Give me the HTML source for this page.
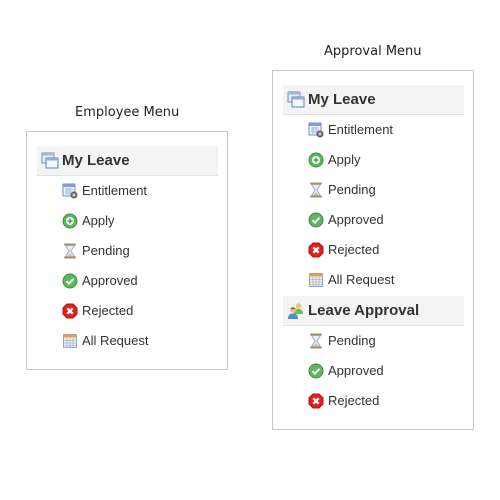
<!DOCTYPE html>
<html><head><meta charset="utf-8"><style>
*{margin:0;padding:0;box-sizing:border-box}
body{width:500px;height:500px;background:#fff;position:relative;overflow:hidden;font-family:"Liberation Sans",Arial,sans-serif;color:#333}
.t{position:absolute;font-family:"DejaVu Sans",sans-serif;font-size:13px;color:#222;white-space:nowrap}
.box{position:absolute;border:1px solid #c8c8c8;background:#fff}
.hd{position:absolute;background:#f4f4f4;border-bottom:1px solid #e2e2e2;height:30px;font-weight:bold;font-size:15px;line-height:30px;color:#333}
.hd svg{position:absolute;left:4px;top:6px}
.hd span{position:absolute;left:25px;top:0}
.it{position:absolute;height:20px;font-size:13px;line-height:20px;color:#333;white-space:nowrap}
.it svg{position:absolute;left:0;top:2px}
.it span{position:absolute;left:20px;top:0}
</style></head><body>
<svg width="0" height="0" style="position:absolute">
<defs>
<symbol id="win" viewBox="0 0 18 18"><rect x="1" y="1" width="12" height="10" fill="#e6eef8" stroke="#6d8fc0"/><rect x="1" y="1" width="12" height="2.5" fill="#9bb6dc"/><rect x="5" y="6" width="12" height="10" fill="#f4f8fd" stroke="#5a7fb8"/><rect x="5" y="6" width="12" height="2.5" fill="#8eaedb"/></symbol>
<symbol id="ent" viewBox="0 0 16 16"><rect x="1" y="1" width="12" height="12" fill="#eef3fb" stroke="#6f8fc4"/><rect x="1" y="1" width="12" height="3" fill="#7e9fd4"/><path d="M3 6h8M3 8h8M3 10h8M5 5v7M8 5v7" stroke="#9db3d8" stroke-width=".8"/><circle cx="12" cy="12" r="3" fill="#888" stroke="#555"/><circle cx="12" cy="12" r="1" fill="#eee"/></symbol>
<symbol id="add" viewBox="0 0 16 16"><circle cx="8" cy="8" r="7" fill="#5cb85c" stroke="#3e8e3e"/><circle cx="8" cy="8" r="4" fill="#fff"/><path d="M8 5.5v5M5.5 8h5" stroke="#4aa24a" stroke-width="1.6"/></symbol>
<symbol id="hg" viewBox="0 0 16 16"><rect x="2" y="0.5" width="12" height="2" rx="1" fill="#b58a5a"/><rect x="2" y="13.5" width="12" height="2" rx="1" fill="#b58a5a"/><path d="M3.5 2.5h9L8.8 8l3.7 5.5h-9L7.2 8z" fill="#e8eef6" stroke="#8aa2c4" stroke-width=".8"/><path d="M5 13h6L8 10z" fill="#e0c48a"/></symbol>
<symbol id="ok" viewBox="0 0 16 16"><circle cx="8" cy="8" r="7" fill="#5cb85c" stroke="#3e8e3e"/><path d="M4.5 8.2l2.4 2.4 4.6-4.8" fill="none" stroke="#fff" stroke-width="2"/></symbol>
<symbol id="no" viewBox="0 0 16 16"><path d="M5 1h6l4 4v6l-4 4H5l-4-4V5z" fill="#e02020" stroke="#b01010"/><path d="M5.3 5.3l5.4 5.4M10.7 5.3l-5.4 5.4" stroke="#fff" stroke-width="2.2"/></symbol>
<symbol id="cal" viewBox="0 0 16 16"><rect x="1.5" y="1.5" width="13" height="13" fill="#f6f0e4" stroke="#8fa6cc"/><rect x="1.5" y="1.5" width="13" height="3" fill="#e0a050"/><path d="M2 7.5h12M2 10h12M2 12.5h12M5 5v9M8 5v9M11 5v9" stroke="#a8b8d8" stroke-width=".8"/></symbol>
<symbol id="ppl" viewBox="0 0 18 18"><circle cx="11.5" cy="4" r="2.8" fill="#f0c080"/><path d="M7 12c0-4 2-5 4.5-5s4.5 1 4.5 5z" fill="#6cbf4c"/><circle cx="6" cy="8" r="2.8" fill="#f0c080"/><path d="M1 17c0-4 2-5.5 5-5.5s5 1.5 5 5.5z" fill="#4a8ad8"/><path d="M3.3 7.2c.5-2.5 4.5-2.5 5.4 0z" fill="#8a5a30"/></symbol>
</defs></svg>

<div class="t" style="left:75px;top:105px">Employee Menu</div>
<div class="box" style="left:26px;top:131px;width:202px;height:239px">
  <div class="hd" style="left:10px;top:14px;width:181px"><svg width="18" height="18"><use href="#win"/></svg><span>My Leave</span></div>
  <div class="it" style="left:35px;top:49px"><svg width="16" height="16"><use href="#ent"/></svg><span>Entitlement</span></div>
  <div class="it" style="left:35px;top:79px"><svg width="16" height="16"><use href="#add"/></svg><span>Apply</span></div>
  <div class="it" style="left:35px;top:109px"><svg width="16" height="16"><use href="#hg"/></svg><span>Pending</span></div>
  <div class="it" style="left:35px;top:139px"><svg width="16" height="16"><use href="#ok"/></svg><span>Approved</span></div>
  <div class="it" style="left:35px;top:169px"><svg width="16" height="16"><use href="#no"/></svg><span>Rejected</span></div>
  <div class="it" style="left:35px;top:199px"><svg width="16" height="16"><use href="#cal"/></svg><span>All Request</span></div>
</div>

<div class="t" style="left:324px;top:44px">Approval Menu</div>
<div class="box" style="left:272px;top:70px;width:202px;height:360px">
  <div class="hd" style="left:10px;top:14px;width:181px"><svg width="18" height="18"><use href="#win"/></svg><span>My Leave</span></div>
  <div class="it" style="left:35px;top:49px"><svg width="16" height="16"><use href="#ent"/></svg><span>Entitlement</span></div>
  <div class="it" style="left:35px;top:79px"><svg width="16" height="16"><use href="#add"/></svg><span>Apply</span></div>
  <div class="it" style="left:35px;top:109px"><svg width="16" height="16"><use href="#hg"/></svg><span>Pending</span></div>
  <div class="it" style="left:35px;top:139px"><svg width="16" height="16"><use href="#ok"/></svg><span>Approved</span></div>
  <div class="it" style="left:35px;top:169px"><svg width="16" height="16"><use href="#no"/></svg><span>Rejected</span></div>
  <div class="it" style="left:35px;top:199px"><svg width="16" height="16"><use href="#cal"/></svg><span>All Request</span></div>
  <div class="hd" style="left:10px;top:225px;width:181px"><svg width="18" height="18"><use href="#ppl"/></svg><span>Leave Approval</span></div>
  <div class="it" style="left:35px;top:260px"><svg width="16" height="16"><use href="#hg"/></svg><span>Pending</span></div>
  <div class="it" style="left:35px;top:290px"><svg width="16" height="16"><use href="#ok"/></svg><span>Approved</span></div>
  <div class="it" style="left:35px;top:320px"><svg width="16" height="16"><use href="#no"/></svg><span>Rejected</span></div>
</div>
</body></html>
